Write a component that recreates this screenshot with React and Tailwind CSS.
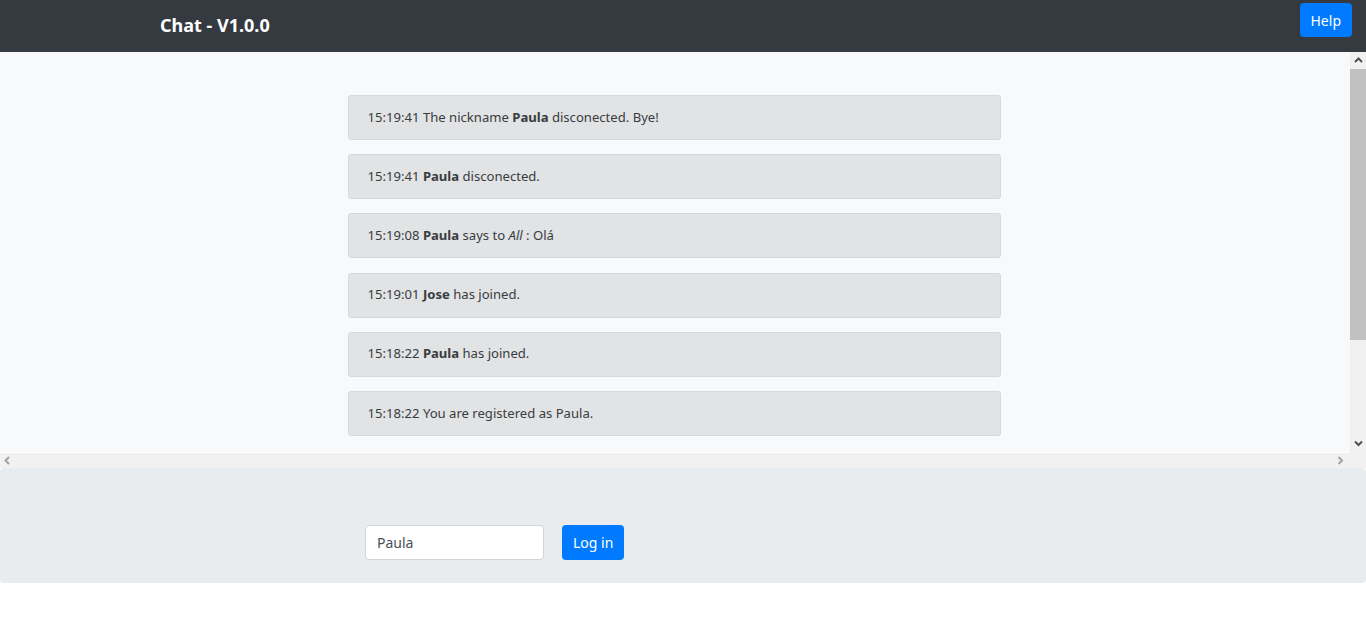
const messages = [
  { time: "15:19:41", parts: [["t", "The nickname "], ["b", "Paula"], ["t", " disconected. Bye!"]] },
  { time: "15:19:41", parts: [["b", "Paula"], ["t", " disconected."]] },
  { time: "15:19:08", parts: [["b", "Paula"], ["t", " says to "], ["i", "All"], ["t", " : Olá"]] },
  { time: "15:19:01", parts: [["b", "Jose"], ["t", " has joined."]] },
  { time: "15:18:22", parts: [["b", "Paula"], ["t", " has joined."]] },
  { time: "15:18:22", parts: [["t", "You are registered as Paula."]] },
];

function Message({ time, parts }) {
  return (
    <div className="h-[45px] flex items-center px-[19px] bg-[#e2e3e5] border border-[#d6d8db] rounded-[3px] text-[13.1px] text-[#383d41] whitespace-pre">
      <span>{time} </span>
      {parts.map(([kind, text], i) =>
        kind === "b" ? (
          <b key={i} className="font-bold">{text}</b>
        ) : kind === "i" ? (
          <i key={i}>{text}</i>
        ) : (
          <span key={i}>{text}</span>
        )
      )}
    </div>
  );
}

function Chevron({ dir, color }) {
  const d = {
    up: "M1 5 L4.5 1.5 L8 5",
    down: "M1 1.5 L4.5 5 L8 1.5",
    left: "M5 1 L1.5 4.5 L5 8",
    right: "M1.5 1 L5 4.5 L1.5 8",
  }[dir];
  const vertical = dir === "up" || dir === "down";
  return (
    <svg width={vertical ? 9 : 7} height={vertical ? 7 : 9} viewBox={vertical ? "0 0 9 7" : "0 0 7 9"} fill="none">
      <path d={d} stroke={color} strokeWidth="2" />
    </svg>
  );
}

export default function App() {
  return (
    <div className="w-[1366px] h-[636px] bg-white flex flex-col" style={{ fontFamily: '"Segoe UI", "Noto Sans", "Open Sans", sans-serif' }}>
      <nav className="h-[52px] shrink-0 bg-[#343a40] flex items-start justify-between pl-[160px] pr-[14px]">
        <span className="mt-[12px] text-white font-bold text-[18px] leading-[26px]">Chat - V1.0.0</span>
        <button type="button" className="mt-[3px] h-[34px] px-[11px] bg-[#007bff] text-white text-[14px] rounded-[4px]">
          Help
        </button>
      </nav>

      <div className="h-[416px] shrink-0 flex">
        <div className="flex-1 flex flex-col">
          <div className="flex-1 overflow-hidden bg-[#f8f9fa] pr-[2px]">
            <div className="w-[653px] mx-auto pt-[43px] flex flex-col gap-[14.2px]">
              {messages.map((m, i) => (
                <Message key={i} {...m} />
              ))}
            </div>
          </div>
          <div className="h-[16px] shrink-0 bg-[#f1f1f1] border-t border-white flex items-center justify-between pl-[4px] pr-[6px]">
            <Chevron dir="left" color="#a3a3a3" />
            <Chevron dir="right" color="#a3a3a3" />
          </div>
        </div>
        <div className="w-[16px] shrink-0 bg-[#f1f1f1] flex flex-col">
          <div className="h-[17px] flex items-center justify-center">
            <Chevron dir="up" color="#505050" />
          </div>
          <div className="h-[271px] bg-[#c1c1c1]" />
          <div className="h-[95px]" />
          <div className="h-[17px] flex items-center justify-center">
            <Chevron dir="down" color="#505050" />
          </div>
        </div>
      </div>

      <div className="h-[115px] shrink-0 bg-[#e9ecef] rounded-[4px] flex items-start gap-[18px] pl-[365px] pt-[57px]">
        <input
          defaultValue="Paula"
          className="w-[179px] h-[35px] px-[11px] bg-white border border-[#ced4da] rounded-[4px] text-[14px] text-[#495057] outline-none"
        />
        <button type="button" className="h-[35px] px-[11px] bg-[#007bff] text-white text-[14px] rounded-[4px]">
          Log in
        </button>
      </div>
    </div>
  );
}
